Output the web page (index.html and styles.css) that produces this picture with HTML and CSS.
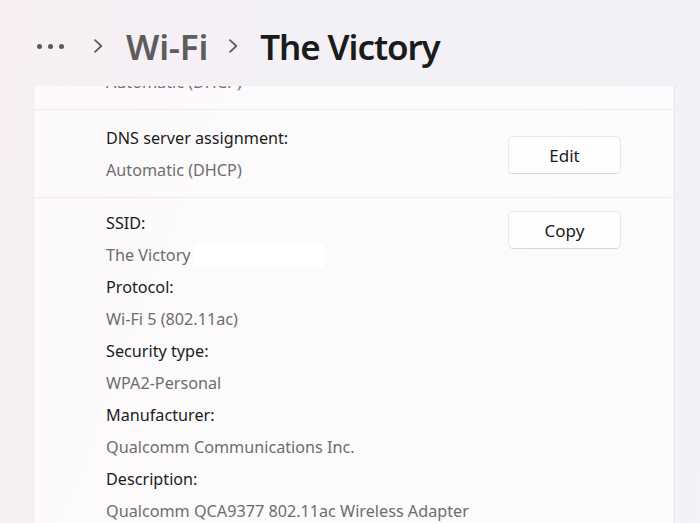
FILE: index.html
```html
<!DOCTYPE html>
<html lang="en">
<head>
<meta charset="utf-8">
<title>Wi-Fi - The Victory</title>
<link rel="stylesheet" href="styles.css">
</head>
<body>
<div class="window">
  <header class="breadcrumb">
    <span class="dots"><i></i><i></i><i></i></span>
    <svg class="chev chev-first" viewBox="0 0 10 14" width="10" height="14"><path d="M2 1.2 L8.3 7 L2 12.8" fill="none" stroke="#5a5a5a" stroke-width="1.7" stroke-linecap="round" stroke-linejoin="round"/></svg>
    <span class="crumb">Wi-Fi</span>
    <svg class="chev" viewBox="0 0 10 14" width="10" height="14"><path d="M2 1.2 L8.3 7 L2 12.8" fill="none" stroke="#5a5a5a" stroke-width="1.7" stroke-linecap="round" stroke-linejoin="round"/></svg>
    <span class="current">The Victory</span>
  </header>
  <main class="viewport">
    <section class="card">
      <div class="row row-center">
        <div class="info">
          <div class="label">IP assignment:</div>
          <div class="value">Automatic (DHCP)</div>
        </div>
        <button class="btn">Edit</button>
      </div>
      <div class="row row-center">
        <div class="info">
          <div class="label">DNS server assignment:</div>
          <div class="value">Automatic (DHCP)</div>
        </div>
        <button class="btn">Edit</button>
      </div>
      <div class="row row-top">
        <div class="info">
          <div class="label">SSID:</div>
          <div class="value"><span>The Victory</span><span class="redact"></span></div>
          <div class="label">Protocol:</div>
          <div class="value">Wi-Fi 5 (802.11ac)</div>
          <div class="label">Security type:</div>
          <div class="value">WPA2-Personal</div>
          <div class="label">Manufacturer:</div>
          <div class="value">Qualcomm Communications Inc.</div>
          <div class="label">Description:</div>
          <div class="value">Qualcomm QCA9377 802.11ac Wireless Adapter</div>
          <div class="label">Driver version:</div>
          <div class="value">12.0.0.953</div>
        </div>
        <button class="btn">Copy</button>
      </div>
    </section>
  </main>
</div>
</body>
</html>
```
FILE: styles.css
```css
* { box-sizing: border-box; }
html, body { margin: 0; padding: 0; }
body {
  width: 700px;
  height: 523px;
  overflow: hidden;
  font-family: "Noto Sans", "Open Sans", sans-serif;
  background: linear-gradient(100deg, #f7eff4 0%, #f4f1f6 35%, #f2f2f7 100%);
}
.window {
  height: 523px;
  display: flex;
  flex-direction: column;
}
.breadcrumb {
  height: 86px;
  flex: none;
  display: flex;
  align-items: center;
  padding: 6px 0 0 37px;
}
.dots {
  display: flex;
  gap: 6px;
}
.dots i {
  width: 5px;
  height: 5px;
  border-radius: 50%;
  background: #5a5a5a;
  display: block;
}
.chev { flex: none; }
.chev-first { margin-left: 29px; }
.crumb {
  font-size: 35px;
  font-weight: 600;
  color: #5d5d5d;
  margin: 0 20px 0 23px;
  letter-spacing: -0.2px;
}
.current {
  font-size: 35px;
  font-weight: 600;
  color: #1b1b1b;
  margin-left: 22px;
  letter-spacing: -1.1px;
}
.viewport {
  flex: 1;
  overflow: hidden;
  padding: 0 25px 0 33px;
}
.card {
  margin-top: -64px;
  background: linear-gradient(110deg, #fcf9fb 0%, #fcfbfc 50%, #fbfbfd 100%);
  border-right: 1px solid #e6e5ea;
  border-left: 1px solid #eeeaee;
}
.row {
  display: flex;
  justify-content: space-between;
  padding: 0 53px 0 72px;
  border-bottom: 1px solid #efeaef;
}
.row-center {
  height: 88px;
  align-items: center;
}
.row-center .btn { margin-top: 3px; }
.row-top {
  align-items: flex-start;
  padding-top: 9px;
}
.row-top .btn { margin-top: 4px; }
.label, .value {
  font-size: 16.2px;
  line-height: 32px;
  white-space: nowrap;
}
.label { color: #1b1b1b; }
.value { color: #6d6d6d; display: flex; align-items: center; }
.redact {
  display: inline-block;
  width: 129px;
  height: 24px;
  background: #ffffff;
  margin-left: 4px;
}
.btn {
  width: 113px;
  height: 38px;
  background: #fefefe;
  border: 1px solid #e8e8e8;
  border-bottom-color: #d6d6d6;
  border-radius: 5px;
  font-family: inherit;
  font-size: 17px;
  color: #1b1b1b;
  padding: 0;
  flex: none;
}
```
